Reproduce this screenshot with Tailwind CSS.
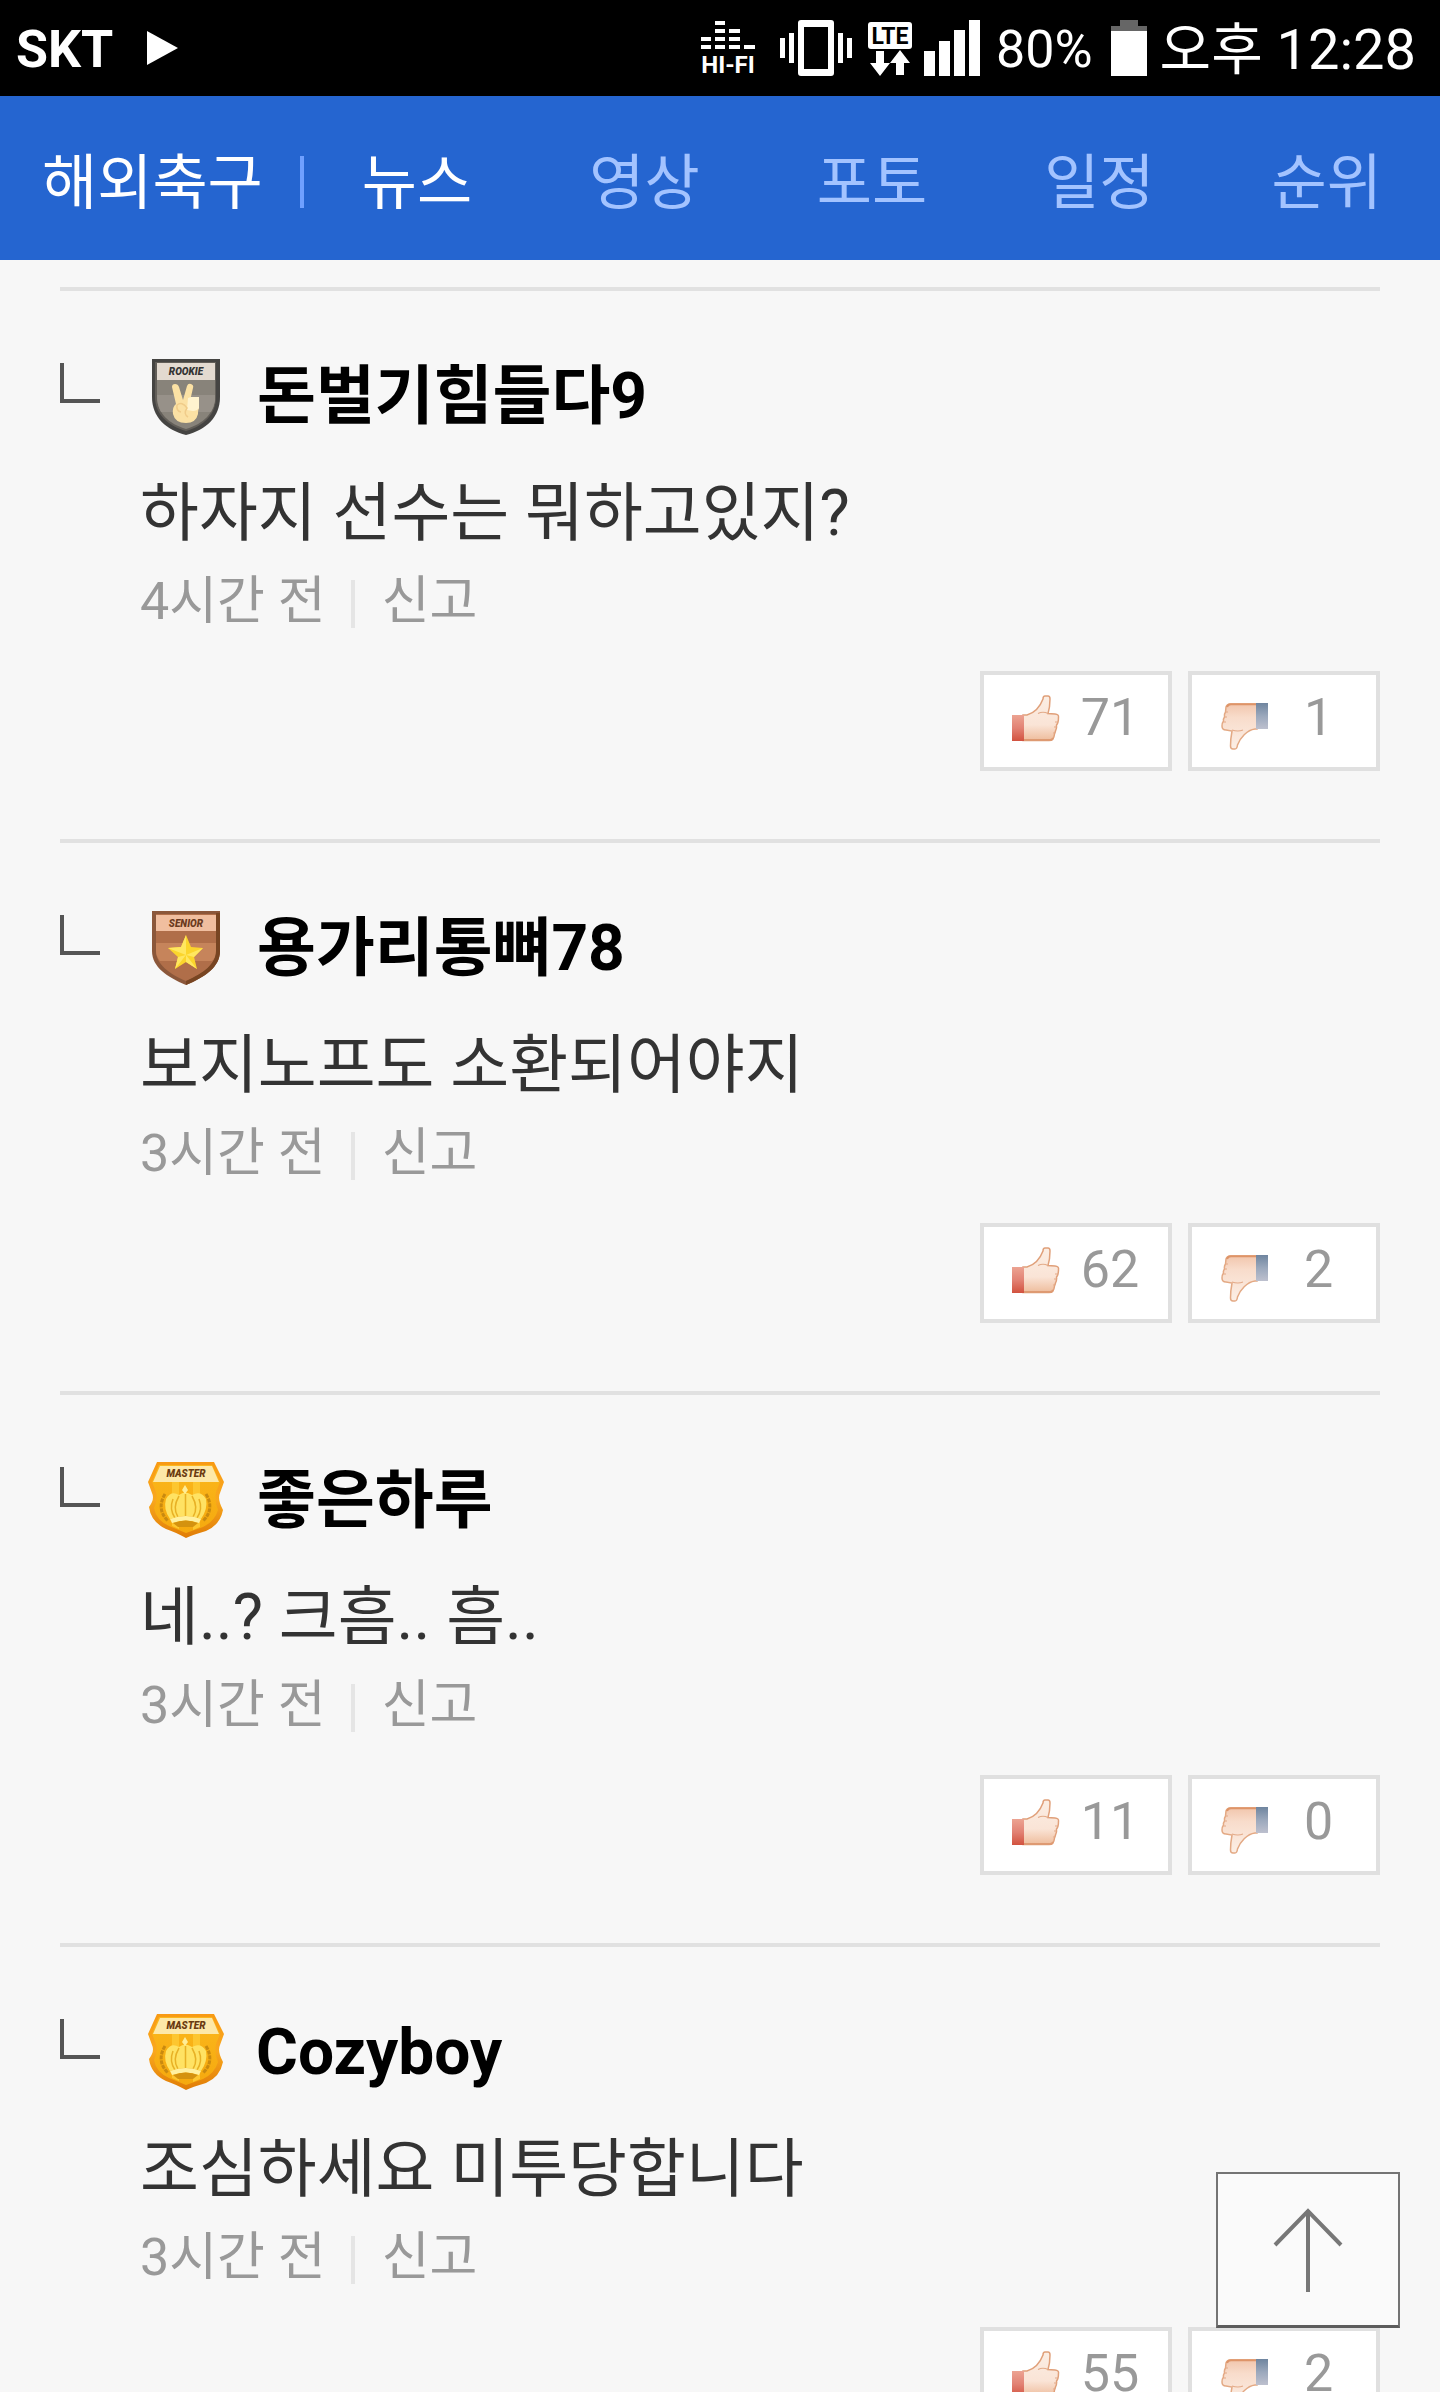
<!DOCTYPE html>
<html lang="ko">
<head>
<meta charset="utf-8">
<meta name="viewport" content="width=device-width, initial-scale=1">
<title>해외축구 뉴스</title>
<script src="https://cdn.jsdelivr.net/npm/@tailwindcss/browser@4"></script>
</head>
<body class="flex h-screen flex-col overflow-hidden bg-[#f7f7f7] font-[Roboto,'Noto_Sans_CJK_KR',sans-serif] text-[#333]">

<!-- Shared icon definitions -->
<svg class="absolute size-0" aria-hidden="true">
  <defs>
    <linearGradient id="skin" x1="0" y1="0" x2="0" y2="1"><stop offset="0" stop-color="#fbeee4"/><stop offset=".65" stop-color="#fae4d6"/><stop offset="1" stop-color="#eebc9c"/></linearGradient>
    <linearGradient id="skinDown" x1="0" y1="0" x2="0" y2="1"><stop offset="0" stop-color="#f1c6ad"/><stop offset=".3" stop-color="#f8dccb"/><stop offset="1" stop-color="#fcefe6"/></linearGradient>
    <linearGradient id="cuffRed" x1="0" y1="0" x2="0" y2="1"><stop offset="0" stop-color="#eca392"/><stop offset=".5" stop-color="#e28274"/><stop offset="1" stop-color="#d2523f"/></linearGradient>
    <linearGradient id="cuffBlue" x1="0" y1="0" x2="0" y2="1"><stop offset="0" stop-color="#6f859f"/><stop offset=".5" stop-color="#9ba8bc"/><stop offset="1" stop-color="#bdc0ce"/></linearGradient>
    <linearGradient id="gold" x1="0" y1="0" x2="0" y2="1"><stop offset="0" stop-color="#f89a14"/><stop offset=".5" stop-color="#f9a81e"/><stop offset="1" stop-color="#e07c06"/></linearGradient>
    <linearGradient id="goldInner" x1="0" y1="0" x2="0" y2="1"><stop offset="0" stop-color="#fbb71c"/><stop offset="1" stop-color="#f5a90e"/></linearGradient>

    <symbol id="thumb-up" viewBox="0 0 48 48">
      <path d="M11 20H15C22 18 28 12 31 4Q31 1 33 1H36Q38 1 38 4Q38 12 36 18.500L43 19Q47 19.500 46.500 22Q46.500 25 46 27Q45.500 29 44.500 30Q45 33 43.500 36Q43 38 42.500 39Q42 43 41 44Q40 45.500 37 45.500H11Z" fill="url(#skin)" stroke="#e0a07a" stroke-width="1.500"/>
      <path d="M26 18.500Q31 16 36 18.500M46 27L43 27M44.500 32L42 32M43 38L41 38" fill="none" stroke="#e3aa88" stroke-width="1.200"/>
      <path d="M12 45H38Q40 45 41 43" fill="none" stroke="#de9a72" stroke-width="1.800"/>
      <path d="M0 20H12V46H0Z" fill="url(#cuffRed)"/>
    </symbol>
    <symbol id="thumb-down" viewBox="0 0 48 48">
      <path d="M36 1H9Q6 1 5 4L4.500 9Q3 11 3.500 14Q2 16 2.500 18Q1 20 1 23Q1 27 5 27L11 28Q9.500 36 9.500 43Q9.500 46 12 46H14Q16 46 16.500 42C19 35 26 27 34 26H36Z" fill="url(#skinDown)" stroke="#e3a984" stroke-width="1.500"/>
      <path d="M36 1.200H10Q7 1.200 6 4" fill="none" stroke="#de9468" stroke-width="2"/>
      <path d="M11 27Q17 29 22 27M4.500 9L7 9M3.500 14L6 14M2.500 19L5 19" fill="none" stroke="#e3aa88" stroke-width="1.200"/>
      <path d="M35 0H47V26H35Z" fill="url(#cuffBlue)"/>
    </symbol>
    <symbol id="reply" viewBox="0 0 40 80"><path d="M2 6V44H40" fill="none" stroke="#555" stroke-width="4"/></symbol>
    <symbol id="rookie" viewBox="0 0 76 80">
      <path d="M4 2H72V40C72 60 58 73 38 78C18 73 4 60 4 40Z" fill="#454442"/>
      <path d="M7 5H68V40C68 57 56 69 38 74C20 69 7 57 7 40Z" fill="#625e58"/>
      <path d="M9 22H67V40C67 56 55 67 38 72C21 67 9 56 9 40Z" fill="#88837a"/>
      <path d="M9 38H67V44Q66 50 63 55H13Q9 48 9 38Z" fill="#979189"/>
      <path d="M9 6H67V23H9Z" fill="#e3dad0"/>
      <path d="M24 30Q24 27 27 27Q30 27 31 30L35 43L39 29Q40 26 43 27Q46 28 45 31L42 44L44 41H51V51Q50 53 50 57Q48 66 38 66Q27 66 25 57Q24 50 28 47Z" fill="#fbe1a4"/>
      <path d="M40 41L43 40H51V51Q49 54 45 54L39 53Z" fill="#fff3cf"/>
      <path d="M29 48Q34 44 39 51Q35 57 40 60M29 48Q28 54 33 55" fill="none" stroke="#f0cc8a" stroke-width="1.500"/>
    </symbol>
    <symbol id="senior" viewBox="0 0 76 80">
      <path d="M4 2H72V42C72 58 57 68 38 76C19 68 4 58 4 42Z" fill="#8b573a"/>
      <path d="M8 5H68V42C68 55 55 65 38 72C21 65 8 55 8 42Z" fill="#b06e49"/>
      <path d="M8 34H68V42Q68 48 64 52H12Q8 47 8 42Z" fill="#c6845b"/>
      <path d="M8 6H68V22H8Z" fill="#f0be9f"/>
      <path d="M72 4V42C72 58 57 68 38 76L38 72C56 64 68 55 68 42V4Z" fill="#784522"/>
      <path d="M38 26L43 38L55 39L46 48L49 60L38 53L27 60L30 48L20 39L33 38Z" fill="#fbd52c"/>
      <path d="M38 26V46L33 38ZM55 39L38 46L46 48ZM49 60L38 46V53ZM27 60L38 46L30 48ZM20 39L38 46L33 38Z" fill="#ffe760"/>
    </symbol>
    <symbol id="master" viewBox="0 0 76 80">
      <path d="M9 1H66L76 21L72 32Q69 38 75 49Q72 64 58 70Q44 74 38 77Q27 71 18 68Q3 61 1 46Q7 38 4 32L0 21Z" fill="url(#gold)"/>
      <path d="M11 4H64L72 21L68 31Q66 39 70 49Q67 60 55 66L38 72L21 65Q8 59 6 47Q10 39 8 31L4 21Z" fill="url(#goldInner)"/>
      <path d="M24 21H31V68L24 65ZM45 21H52V66L45 69Z" fill="#fdc62f"/>
      <path d="M12 5H64L71 21H5Z" fill="#fde8a8"/>
      <path d="M17 33Q8 48 20 60M58 33Q67 48 55 60" fill="none" stroke="#c98a10" stroke-width="3" stroke-dasharray="4 1"/>
      <path d="M22 58Q15 48 18 38Q23 29 31 34Q37 29 44 34Q53 29 58 38Q60 48 53 58Q38 52 22 58Z" fill="#ffe263"/>
      <path d="M31 35Q24 47 30 56M37.500 33V55M44 35Q51 47 45 56M25 38Q21 48 27 57M51 38Q55 48 49 57" fill="none" stroke="#e8b125" stroke-width="1.500"/>
      <path d="M37 24L40 29L37 33L34 29Z" fill="#ffed96"/>
      <path d="M22 58Q38 52 53 58L51 62Q38 57 24 62Z" fill="#fff0a0"/>
      <path d="M25 62Q38 57 50 62L45 66H30Z" fill="#d4920f"/>
    </symbol>
  </defs>
</svg>

<!-- Status bar -->
<div class="flex h-24 shrink-0 items-center justify-between bg-black pr-6 pl-4 text-white">
  <div class="flex items-center gap-[34px]">
    <span class="pt-1 text-[52px] leading-[68px] font-bold">SKT</span>
    <svg class="h-9 w-8" viewBox="0 0 32 36" aria-hidden="true"><path d="M0 1L31 18L0 35Z" fill="#fff"/></svg>
  </div>
  <div class="flex items-center">
    <svg class="mr-6 h-14 w-14 overflow-visible" viewBox="0 0 56 56" fill="#fff" aria-label="HI-FI">
      <path d="M15 1H25V5H15ZM15 9H25V13H15ZM29 9H40V13H29ZM1 17H11V21H1ZM15 17H25V21H15ZM29 17H40V21H29ZM1 25H11V29H1ZM15 25H25V29H15ZM29 25H40V29H29ZM44 25H55V29H44Z"/>
      <text x="28" y="53" text-anchor="middle" font-size="24" font-weight="700">HI-FI</text>
    </svg>
    <svg class="mr-4 h-14 w-[72px]" viewBox="0 0 72 56" fill="#fff" aria-label="진동">
      <path d="M0 18H5V38H0ZM9 13H14V43H9ZM58 13H63V43H58ZM67 18H72V38H67Z"/>
      <path fill-rule="evenodd" d="M21 0H51Q54 0 54 3V53Q54 56 51 56H21Q18 56 18 53V3Q18 0 21 0ZM24 7V49H48V7Z"/>
    </svg>
    <svg class="mr-3 h-14 w-11" viewBox="0 0 44 56" fill="#fff" aria-label="LTE">
      <rect y="2" width="44" height="27" rx="3"/>
      <text x="22" y="24" text-anchor="middle" font-size="23" font-weight="700" fill="#000">LTE</text>
      <path d="M8 31H16V43H22L12 56L2 43H8ZM32 30L42 43H36V55H28V43H22Z"/>
    </svg>
    <svg class="mr-4 h-14 w-14" viewBox="0 0 56 56" fill="#fff" aria-label="신호"><path d="M0 31H11V56H0ZM15 21H26V56H15ZM30 10H41V56H30ZM45 0H56V56H45Z"/></svg>
    <span class="mr-[18px] pt-1 text-[52px] leading-[68px]">80%</span>
    <svg class="mr-[13px] h-14 w-9" viewBox="0 0 36 56" aria-label="배터리"><path d="M9 0H27V6H36V11H0V6H9Z" fill="#666"/><path d="M0 11H36V56H0Z" fill="#fff"/></svg>
    <span class="pt-1 text-[56px] leading-[70px]">오후 12:28</span>
  </div>
</div>

<!-- Section navigation -->
<header class="flex h-[164px] shrink-0 items-center bg-[#2565d0] pr-[58px] pl-[42px] text-[60px] leading-[72px] text-[#a3c3ff]">
  <h1 class="pt-3 text-white"><a href="#">해외축구</a></h1>
  <span class="mt-2 ml-[37px] h-[52px] w-1 bg-[#6fa0ff]"></span>
  <nav class="ml-[58px] flex flex-1 justify-between pt-3">
    <a href="#" class="text-white" aria-current="page">뉴스</a>
    <a href="#">영상</a>
    <a href="#">포토</a>
    <a href="#">일정</a>
    <a href="#">순위</a>
  </nav>
</header>

<!-- Comments -->
<main class="min-h-0 flex-1 overflow-hidden px-[60px] pt-[27px]">
  <article class="border-t-4 border-[#e1e1e1] pt-[66px] pb-[68px]">
    <div class="flex">
      <svg class="mr-12 h-20 w-10" aria-hidden="true"><use href="#reply"/></svg>
      <svg class="mr-[33px] h-20 w-[76px]" viewBox="0 0 76 80"><use href="#rookie"/><text x="38" y="18" text-anchor="middle" font-size="10" font-weight="900" font-style="italic" fill="#333">ROOKIE</text></svg>
      <h2 class="text-[64px] leading-[80px] font-bold text-black">돈벌기힘들다9</h2>
    </div>
    <p class="mt-[29px] pl-20 text-[64px] leading-[96px]">하자지 선수는 뭐하고있지?</p>
    <div class="mt-2 flex items-center pl-20 text-[52px] leading-[64px] text-[#999]">
      <time>4시간 전</time><span class="mt-1 mr-[27px] ml-[25px] h-12 w-1 bg-[#e5e5e5]"></span><a href="#">신고</a>
    </div>
    <div class="mt-[37px] flex justify-end gap-4 text-[52px] leading-[86px] text-[#999]">
      <button type="button" aria-label="공감" class="flex h-[100px] w-48 border-4 border-[#e0e0e0] bg-white pl-7"><svg class="mt-5 size-12"><use href="#thumb-up"/></svg><span class="flex-1 pr-2 text-center">71</span></button>
      <button type="button" aria-label="비공감" class="flex h-[100px] w-48 border-4 border-[#e0e0e0] bg-white pl-[29px]"><svg class="mt-7 size-12"><use href="#thumb-down"/></svg><span class="flex-1 pr-2 text-center">1</span></button>
    </div>
  </article>

  <article class="border-t-4 border-[#e1e1e1] pt-[66px] pb-[68px]">
    <div class="flex">
      <svg class="mr-12 h-20 w-10" aria-hidden="true"><use href="#reply"/></svg>
      <svg class="mr-[33px] h-20 w-[76px]" viewBox="0 0 76 80"><use href="#senior"/><text x="38" y="18" text-anchor="middle" font-size="10" font-weight="900" font-style="italic" fill="#6b3a20">SENIOR</text></svg>
      <h2 class="text-[64px] leading-[80px] font-bold text-black">용가리통뼈78</h2>
    </div>
    <p class="mt-[29px] pl-20 text-[64px] leading-[96px]">보지노프도 소환되어야지</p>
    <div class="mt-2 flex items-center pl-20 text-[52px] leading-[64px] text-[#999]">
      <time>3시간 전</time><span class="mt-1 mr-[27px] ml-[25px] h-12 w-1 bg-[#e5e5e5]"></span><a href="#">신고</a>
    </div>
    <div class="mt-[37px] flex justify-end gap-4 text-[52px] leading-[86px] text-[#999]">
      <button type="button" aria-label="공감" class="flex h-[100px] w-48 border-4 border-[#e0e0e0] bg-white pl-7"><svg class="mt-5 size-12"><use href="#thumb-up"/></svg><span class="flex-1 pr-2 text-center">62</span></button>
      <button type="button" aria-label="비공감" class="flex h-[100px] w-48 border-4 border-[#e0e0e0] bg-white pl-[29px]"><svg class="mt-7 size-12"><use href="#thumb-down"/></svg><span class="flex-1 pr-2 text-center">2</span></button>
    </div>
  </article>

  <article class="border-t-4 border-[#e1e1e1] pt-[66px] pb-[68px]">
    <div class="flex">
      <svg class="mr-12 h-20 w-10" aria-hidden="true"><use href="#reply"/></svg>
      <svg class="mr-[33px] h-20 w-[76px]" viewBox="0 0 76 80"><use href="#master"/><text x="38" y="16" text-anchor="middle" font-size="10" font-weight="900" font-style="italic" fill="#6b3a10">MASTER</text></svg>
      <h2 class="text-[64px] leading-[80px] font-bold text-black">좋은하루</h2>
    </div>
    <p class="mt-[29px] pl-20 text-[64px] leading-[96px]">네..? 크흠.. 흠..</p>
    <div class="mt-2 flex items-center pl-20 text-[52px] leading-[64px] text-[#999]">
      <time>3시간 전</time><span class="mt-1 mr-[27px] ml-[25px] h-12 w-1 bg-[#e5e5e5]"></span><a href="#">신고</a>
    </div>
    <div class="mt-[37px] flex justify-end gap-4 text-[52px] leading-[86px] text-[#999]">
      <button type="button" aria-label="공감" class="flex h-[100px] w-48 border-4 border-[#e0e0e0] bg-white pl-7"><svg class="mt-5 size-12"><use href="#thumb-up"/></svg><span class="flex-1 pr-2 text-center">11</span></button>
      <button type="button" aria-label="비공감" class="flex h-[100px] w-48 border-4 border-[#e0e0e0] bg-white pl-[29px]"><svg class="mt-7 size-12"><use href="#thumb-down"/></svg><span class="flex-1 pr-2 text-center">0</span></button>
    </div>
  </article>

  <article class="border-t-4 border-[#e1e1e1] pt-[66px] pb-[68px]">
    <div class="flex">
      <svg class="mr-12 h-20 w-10" aria-hidden="true"><use href="#reply"/></svg>
      <svg class="mr-8 h-20 w-[76px]" viewBox="0 0 76 80"><use href="#master"/><text x="38" y="16" text-anchor="middle" font-size="10" font-weight="900" font-style="italic" fill="#6b3a10">MASTER</text></svg>
      <h2 class="text-[64px] leading-[80px] font-bold text-black">Cozyboy</h2>
    </div>
    <p class="mt-[29px] pl-20 text-[64px] leading-[96px]">조심하세요 미투당합니다</p>
    <div class="mt-2 flex items-center pl-20 text-[52px] leading-[64px] text-[#999]">
      <time>3시간 전</time><span class="mt-1 mr-[27px] ml-[25px] h-12 w-1 bg-[#e5e5e5]"></span><a href="#">신고</a>
    </div>
    <div class="mt-[37px] flex justify-end gap-4 text-[52px] leading-[86px] text-[#999]">
      <button type="button" aria-label="공감" class="flex h-[100px] w-48 border-4 border-[#e0e0e0] bg-white pl-7"><svg class="mt-5 size-12"><use href="#thumb-up"/></svg><span class="flex-1 pr-2 text-center">55</span></button>
      <button type="button" aria-label="비공감" class="flex h-[100px] w-48 border-4 border-[#e0e0e0] bg-white pl-[29px]"><svg class="mt-7 size-12"><use href="#thumb-down"/></svg><span class="flex-1 pr-2 text-center">2</span></button>
    </div>
  </article>
</main>

<button type="button" aria-label="맨 위로" class="fixed right-10 bottom-16 flex h-[156px] w-[184px] items-center justify-center border-2 border-b-3 border-[#747474] border-b-[#5c5c5c] bg-[#fafafa]">
  <svg class="h-[88px] w-[72px]" viewBox="0 0 72 88" fill="none" stroke="#777" stroke-width="4"><path d="M36 4V86M3 39L36 5L69 39"/></svg>
</button>
</body>
</html>
